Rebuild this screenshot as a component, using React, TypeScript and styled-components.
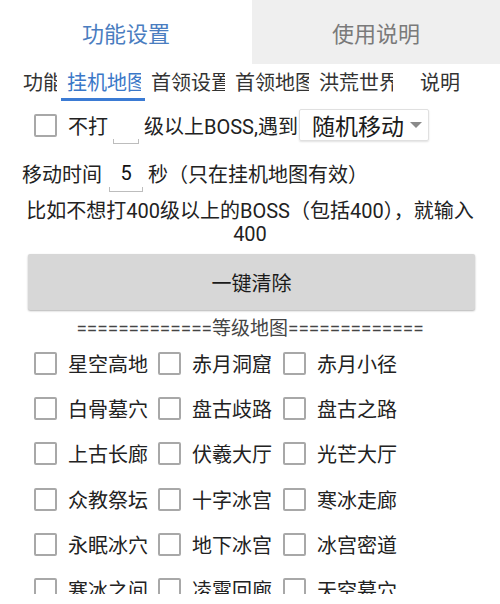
import React from "react";
import styled, { createGlobalStyle } from "styled-components";

const Global = createGlobalStyle`
  html, body { margin: 0; padding: 0; background: #fff; }
  body { font-family: Roboto, "Noto Sans CJK SC", sans-serif; color: #222; }
  * { box-sizing: border-box; }
`;

const Screen = styled.div`
  width: 500px;
  height: 594px;
  overflow: hidden;
  background: #fff;
`;

const TopTabs = styled.div`
  display: grid;
  grid-template-columns: 252px 248px;
  height: 64px;
`;

const TopTab = styled.div<{ $active?: boolean }>`
  display: flex;
  align-items: center;
  justify-content: center;
  font-size: 22px;
  background: ${(p) => (p.$active ? "#fff" : "#efefef")};
  color: ${(p) => (p.$active ? "#4a7dc0" : "#7a7a7a")};
`;

const SubTabStrip = styled.div`
  display: flex;
  height: 37px;
  padding-left: 17px;
  overflow: hidden;
`;

const SubTab = styled.div<{ $active?: boolean; $w: number }>`
  flex: 0 0 ${(p) => p.$w}px;
  width: ${(p) => p.$w}px;
  min-width: 0;
  height: 37px;
  padding: 4px 4px 0 6px;
  border-bottom: 3px solid ${(p) => (p.$active ? "#3b7bd4" : "transparent")};
`;

const SubTabText = styled.span<{ $active?: boolean }>`
  display: block;
  overflow: hidden;
  white-space: nowrap;
  text-align: center;
  font-size: 20px;
  line-height: 30px;
  color: ${(p) => (p.$active ? "#3b78c8" : "#333")};
`;

const Row = styled.div<{ $pad: number }>`
  display: flex;
  align-items: center;
  height: 48px;
  padding-left: ${(p) => p.$pad}px;
  font-size: 20px;
  white-space: nowrap;
`;

const Box = styled.span`
  display: inline-block;
  flex: 0 0 23px;
  width: 23px;
  height: 23px;
  border: 2px solid #a8a8a8;
  border-radius: 2px;
  background: #fff;
`;

const Label = styled.span<{ $ml?: number }>`
  margin-left: ${(p) => p.$ml ?? 0}px;
`;

const Field = styled.span<{ $w: number; $ml: number; $mr: number }>`
  position: relative;
  display: inline-flex;
  justify-content: center;
  align-items: center;
  width: ${(p) => p.$w}px;
  height: 34px;
  margin: 0 ${(p) => p.$mr}px 0 ${(p) => p.$ml}px;
  font-size: 20px;
  color: #111;
  &::after {
    content: "";
    position: absolute;
    left: 0;
    right: 0;
    bottom: -2px;
    height: 4px;
    border: 1px solid #bdbdbd;
    border-top: none;
  }
`;

const Spinner = styled.div`
  display: flex;
  align-items: center;
  justify-content: space-between;
  width: 130px;
  height: 32px;
  margin-left: 1px;
  padding: 0 4px 0 12px;
  border: 1px solid #e0e0e0;
  border-radius: 2px;
  box-shadow: 0 1px 2px rgba(0, 0, 0, 0.12);
  font-size: 23px;
  color: #1a1a1a;
`;

const Caret = styled.span`
  width: 0;
  height: 0;
  border-left: 6px solid transparent;
  border-right: 6px solid transparent;
  border-top: 6px solid #8a8a8a;
  margin-right: 2px;
`;

const Hint = styled.p`
  margin: 3px 0 0;
  padding: 0 18px;
  text-align: center;
  font-size: 20px;
  line-height: 23px;
  color: #222;
`;

const ClearButton = styled.button`
  display: block;
  margin: 8px 25px 0 28px;
  width: 447px;
  height: 56px;
  border: none;
  border-radius: 2px;
  background: #d7d7d7;
  box-shadow: 0 1px 2px rgba(0, 0, 0, 0.3);
  font-family: inherit;
  font-size: 20px;
  color: #1a1a1a;
`;

const Divider = styled.div`
  margin-top: 7px;
  text-align: center;
  font-size: 19px;
  line-height: 24px;
  color: #444;
  white-space: nowrap;
`;

const MapGrid = styled.div`
  display: grid;
  grid-template-columns: 124px 125px 124px;
  grid-auto-rows: 45.2px;
  padding-left: 34px;
`;

const MapItem = styled.label`
  display: flex;
  align-items: center;
  font-size: 20px;
  white-space: nowrap;
`;

const subTabs = [
  { t: "功能设置", w: 44 },
  { t: "挂机地图", w: 84 },
  { t: "首领设置", w: 84 },
  { t: "首领地图", w: 84 },
  { t: "洪荒世界", w: 84 },
  { t: "说明", w: 84 },
];

const maps = [
  "星空高地", "赤月洞窟", "赤月小径",
  "白骨墓穴", "盘古歧路", "盘古之路",
  "上古长廊", "伏羲大厅", "光芒大厅",
  "众教祭坛", "十字冰宫", "寒冰走廊",
  "永眠冰穴", "地下冰宫", "冰宫密道",
  "寒冰之间", "凌霄回廊", "天空墓穴",
];

export default function App() {
  return (
    <Screen>
      <Global />
      <TopTabs>
        <TopTab $active>功能设置</TopTab>
        <TopTab>使用说明</TopTab>
      </TopTabs>

      <SubTabStrip>
        {subTabs.map((s, i) => (
          <SubTab key={s.t} $w={s.w} $active={i === 1}>
            <SubTabText $active={i === 1}>{s.t}</SubTabText>
          </SubTab>
        ))}
      </SubTabStrip>

      <Row $pad={34}>
        <Box />
        <Label $ml={11}>不打</Label>
        <Field $w={26} $ml={5} $mr={5} />
        <Label>级以上BOSS,遇到</Label>
        <Spinner>
          <span>随机移动</span>
          <Caret />
        </Spinner>
      </Row>

      <Row $pad={22}>
        <Label>移动时间</Label>
        <Field $w={34} $ml={7} $mr={5}>5</Field>
        <Label>秒（只在挂机地图有效）</Label>
      </Row>

      <Hint>比如不想打400级以上的BOSS（包括400），就输入400</Hint>

      <ClearButton>一键清除</ClearButton>

      <Divider>=============等级地图=============</Divider>

      <MapGrid>
        {maps.map((m) => (
          <MapItem key={m}>
            <Box />
            <Label $ml={11}>{m}</Label>
          </MapItem>
        ))}
      </MapGrid>
    </Screen>
  );
}
